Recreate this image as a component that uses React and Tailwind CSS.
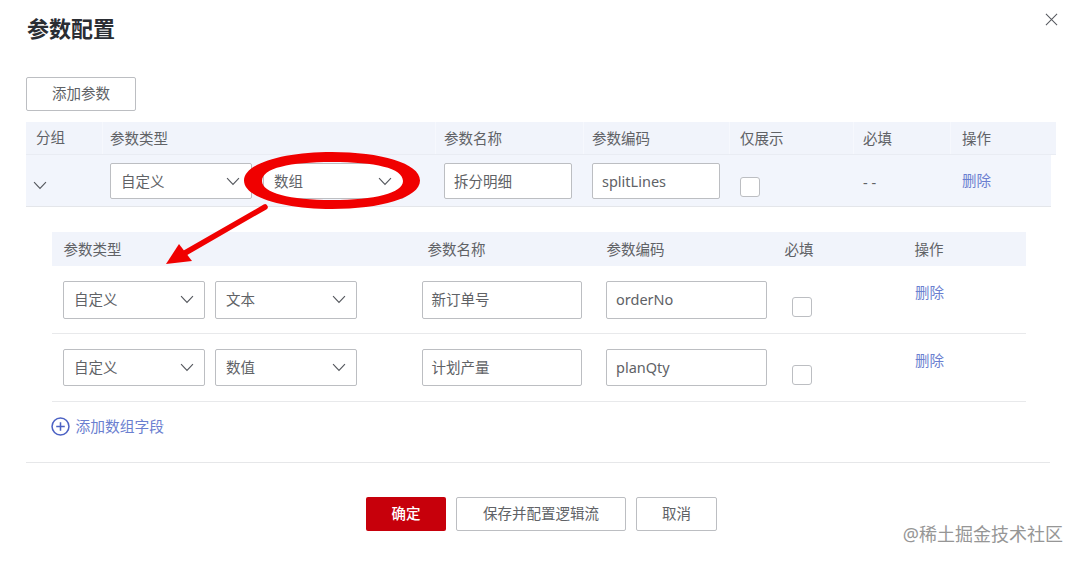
const FONT = "font-['Noto_Sans','Noto_Sans_CJK_SC',sans-serif]";

function Chevron({ className = "" }) {
  return (
    <svg viewBox="0 0 16 10" className={`w-[14px] h-[9px] shrink-0 ${className}`} fill="none" stroke="#55585e" strokeWidth="1.3">
      <path d="M1.2 1.2 L8 8.4 L14.8 1.2" />
    </svg>
  );
}

function Select({ label, w, h = "h-[36px] pt-[1px]", pr = "pr-[11px]" }) {
  return (
    <div className={`${w} ${h} ${pr} flex items-center justify-between pl-[10px] bg-white border border-[#bcbec2] rounded-[2px] text-[14.5px] text-[#606266]`}>
      <span>{label}</span>
      <Chevron className="mt-[-1px]" />
    </div>
  );
}

function Field({ value, w, h = "h-[36px] pt-[1px]" }) {
  return (
    <div className={`${w} ${h} flex items-center pl-[9px] bg-white border border-[#bcbec2] rounded-[2px] text-[14.5px] text-[#606266]`}>
      {value}
    </div>
  );
}

function Check() {
  return <div className="w-[20px] h-[20px] bg-white border border-[#bcbec2] rounded-[3px]" />;
}

function SubRow({ type, name, code, rowH, boxH }) {
  return (
    <div className={`grid grid-cols-[358.5px_184.5px_186px_123px_1fr] ${rowH} border-b border-[#e8e9eb] pl-[11.5px]`}>
      <div className="flex gap-[10px] pt-[15px]">
        <Select label="自定义" w="w-[142px]" h={boxH} pr="pr-[10px]" />
        <Select label={type} w="w-[142px]" h={boxH} pr="pr-[10px]" />
      </div>
      <div className="pt-[15px]"><Field value={name} w="w-[160px]" h={boxH} /></div>
      <div className="pt-[15px]"><Field value={code} w="w-[161px]" h={boxH} /></div>
      <div className="pt-[31px]"><Check /></div>
      <div className="pt-[15px] text-[14.5px] leading-[22px] text-[#6b7fd0]">删除</div>
    </div>
  );
}

export default function App() {
  return (
    <div className={`${FONT} relative w-[1080px] h-[561px] overflow-hidden bg-white px-[26px]`}>
      <div className="flex justify-between pt-[14px]">
        <h1 className="pl-[1px] text-[22px] leading-[28px] font-bold text-[#2a2d33]">参数配置</h1>
        <svg viewBox="0 0 14 14" className="w-[13px] h-[13px] mt-[-1px] mr-[-3.5px]" fill="none" stroke="#55585e" strokeWidth="1.1">
          <path d="M1 1 L13 13 M13 1 L1 13" />
        </svg>
      </div>

      <button className="mt-[35px] block w-[110px] h-[34px] bg-white border border-[#bcbec2] rounded-[2px] text-[14.5px] text-[#606266]">
        添加参数
      </button>

      <div className="mt-[11px] w-[1030px] h-[33px] grid grid-cols-[76px_333px_148px_146px_124px_97px_1fr] items-center bg-[#f1f4fb] text-[14.5px] text-[#606266] border-b border-[#e9ecf3]">
        <div className="pl-[10px]">分组</div>
        <div className="pl-[7px] border-l border-[#f6f8fd] leading-[32px]">参数类型</div>
        <div className="pl-[8px] border-l border-[#f6f8fd] leading-[32px]">参数名称</div>
        <div className="pl-[8px] border-l border-[#f6f8fd] leading-[32px]">参数编码</div>
        <div className="pl-[10px] border-l border-[#f6f8fd] leading-[32px]">仅展示</div>
        <div className="pl-[9px] border-l border-[#f6f8fd] leading-[32px]">必填</div>
        <div className="pl-[11px] border-l border-[#f6f8fd] leading-[32px]">操作</div>
      </div>

      <div className="w-[1025px] h-[52px] grid grid-cols-[84px_334px_148px_148px_123px_99px_1fr] bg-[#f2f5fc] border-b border-[#e4e6ea] text-[14.5px] text-[#606266]">
        <div className="pl-[7px] pt-[26px]"><Chevron /></div>
        <div className="flex gap-[11px] pt-[8px]">
          <Select label="自定义" w="w-[142px]" />
          <Select label="数组" w="w-[141px]" />
        </div>
        <div className="pt-[8px]"><Field value="拆分明细" w="w-[128px]" /></div>
        <div className="pt-[8px]"><Field value="splitLines" w="w-[128px]" /></div>
        <div className="pt-[22px]"><Check /></div>
        <div className="pt-[16px] leading-[22px]">- -</div>
        <div className="pt-[14px] leading-[22px] text-[#6b7fd0]">删除</div>
      </div>

      <div className="ml-[25.5px] w-[974px] mt-[25px]">
        <div className="h-[34px] pt-[2px] grid grid-cols-[364px_179px_178px_130px_1fr] items-center bg-[#f1f4fb] pl-[12px] text-[14.5px] text-[#606266]">
          <div>参数类型</div>
          <div>参数名称</div>
          <div>参数编码</div>
          <div>必填</div>
          <div>操作</div>
        </div>
        <SubRow type="文本" name="新订单号" code="orderNo" rowH="h-[68px]" boxH="h-[38px]" />
        <SubRow type="数值" name="计划产量" code="planQty" rowH="h-[68px]" boxH="h-[37px]" />
        <button className="mt-[13px] -ml-[1px] flex items-center gap-[6px] h-[22px] text-[14.75px] leading-[21px] text-[#6b7fd0]">
          <svg viewBox="0 0 20 20" className="w-[19px] h-[19px]" fill="none" stroke="#4c62c4" strokeWidth="1.6">
            <circle cx="10" cy="10" r="8.9" />
            <path d="M10 5.5 V14.5 M5.5 10 H14.5" />
          </svg>
          <span>添加数组字段</span>
        </button>
      </div>

      <div className="mt-[25px] w-[1024px] border-b border-[#e6e7e9]" />

      <div className="mt-[34px] flex justify-center gap-[10px] pl-[3px] text-[14.5px]">
        <button className="w-[80px] h-[34px] bg-[#c7000b] rounded-[2px] text-white font-medium">确定</button>
        <button className="w-[170px] h-[34px] bg-white border border-[#bcbec2] rounded-[2px] text-[#606266]">保存并配置逻辑流</button>
        <button className="w-[81px] h-[34px] bg-white border border-[#bcbec2] rounded-[2px] text-[#606266]">取消</button>
      </div>

      <div className="absolute right-[17px] top-[521px] text-[18px] leading-[26px] text-[#969696]">@稀土掘金技术社区</div>

      <svg viewBox="0 0 1080 561" className="absolute left-0 top-0 w-[1080px] h-[561px] pointer-events-none" fill="none">
        <path
          fillRule="evenodd"
          fill="#f00000"
          d="M244 180.5 C244 163 285 152 332 152 C380 152 420 163 420 180.5 C420 198 380 209 332 209 C285 209 244 198 244 180.5 Z M262 181 C262 168 290 162 332 162 C375 162 403 168 403 181 C403 193 375 200 332 200 C290 200 262 193 262 181 Z"
        />
        <path d="M265 207 L185 253" stroke="#f00000" strokeWidth="5.5" strokeLinecap="round" />
        <path d="M166 264 L179 244 L192 261 Z" fill="#f00000" />
      </svg>
    </div>
  );
}
